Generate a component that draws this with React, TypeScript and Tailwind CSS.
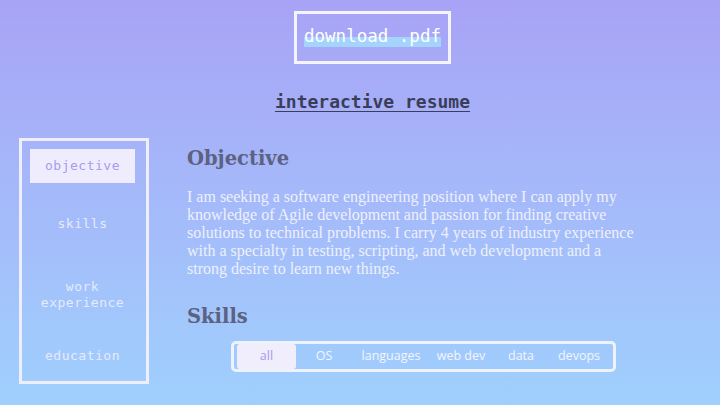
const mono = "font-['DejaVu_Sans_Mono',monospace]"
const serif = "font-['Liberation_Serif',serif]"
const heading = "font-['DejaVu_Serif',serif]"

const navItems = ["objective", "skills", "work experience", "education"]
const tabs = ["all", "OS", "languages", "web dev", "data", "devops"]

export default function App() {
  return (
    <div className="w-[720px] h-[405px] overflow-hidden bg-gradient-to-b from-[#a8a3f6] to-[#9fd0fd]">
      {/* Header */}
      <div className="flex flex-col items-center pt-[11px] pl-[25px]">
        <div className="w-[157px] h-[53px] border-[3px] border-[#f4f3fe] flex items-center justify-center">
          <span
            className={`${mono} text-[17.5px] text-white leading-none pb-[2px] bg-[linear-gradient(transparent_45%,#a4d3fb_45%)]`}
          >
            download .pdf
          </span>
        </div>
        <h1 className={`${mono} mt-[29px] text-[18px] font-bold leading-none text-[#3b3e5a] underline underline-offset-[3px]`}>
          interactive resume
        </h1>
      </div>

      <div className="flex mt-[27px] pl-[19px]">
        {/* Sidebar */}
        <nav className="w-[130px] h-[246px] border-[3px] border-[#eeeefd] pl-[8px] pr-[11px] pt-[8px] flex flex-col">
          {navItems.map((item, i) => (
            <div
              key={item}
              className={`${mono} text-[13px] leading-[16px] tracking-[0.5px] text-center flex items-center justify-center ${
                i === 0
                  ? "h-[34px] bg-[#efedfd] text-[#a49cf0]"
                  : "text-[#e6eafd]"
              } ${i === 1 ? "mt-[33px] h-[15px]" : ""} ${i === 2 ? "mt-[48px] h-[32px]" : ""} ${i === 3 ? "mt-[37px] h-[15px]" : ""}`}
            >
              {item}
            </div>
          ))}
        </nav>

        {/* Content */}
        <main className="ml-[38px] w-[475px]">
          <h2 className={`${heading} text-[19.5px] font-bold text-[#5d6182] leading-none mt-[11px]`}>Objective</h2>
          <p className={`${serif} mt-[19px] text-[16px] leading-[18px] text-[#eef0fd]`}>
            I am seeking a software engineering position where I can apply my knowledge of Agile development and
            passion for finding creative solutions to technical problems. I carry 4 years of industry experience with
            a specialty in testing, scripting, and web development and a<br />strong desire to learn new things.
          </p>
          <h2 className={`${heading} text-[19.5px] font-bold text-[#5d6182] leading-none mt-[29px]`}>Skills</h2>
          <div className="ml-[44px] mt-[15px] w-[385px] h-[31px] border-[3px] border-[#eef2fd] rounded-[5px] flex items-center px-[3px]">
            {tabs.map((t, i) => (
              <div
                key={t}
                className={`font-['Open_Sans',sans-serif] text-[12.5px] h-[25px] flex items-center justify-center ${
                  i === 0 ? "w-[59px] bg-[#f0eefd] text-[#a49cf0] rounded-[3px]" : "text-[#f3f5fe]"
                } ${i === 1 ? "w-[56px]" : ""} ${i === 2 ? "w-[78px]" : ""} ${i === 3 ? "w-[62px]" : ""} ${
                  i === 4 ? "w-[58px]" : ""
                } ${i === 5 ? "w-[58px]" : ""}`}
              >
                {t}
              </div>
            ))}
          </div>
        </main>
      </div>
    </div>
  )
}
